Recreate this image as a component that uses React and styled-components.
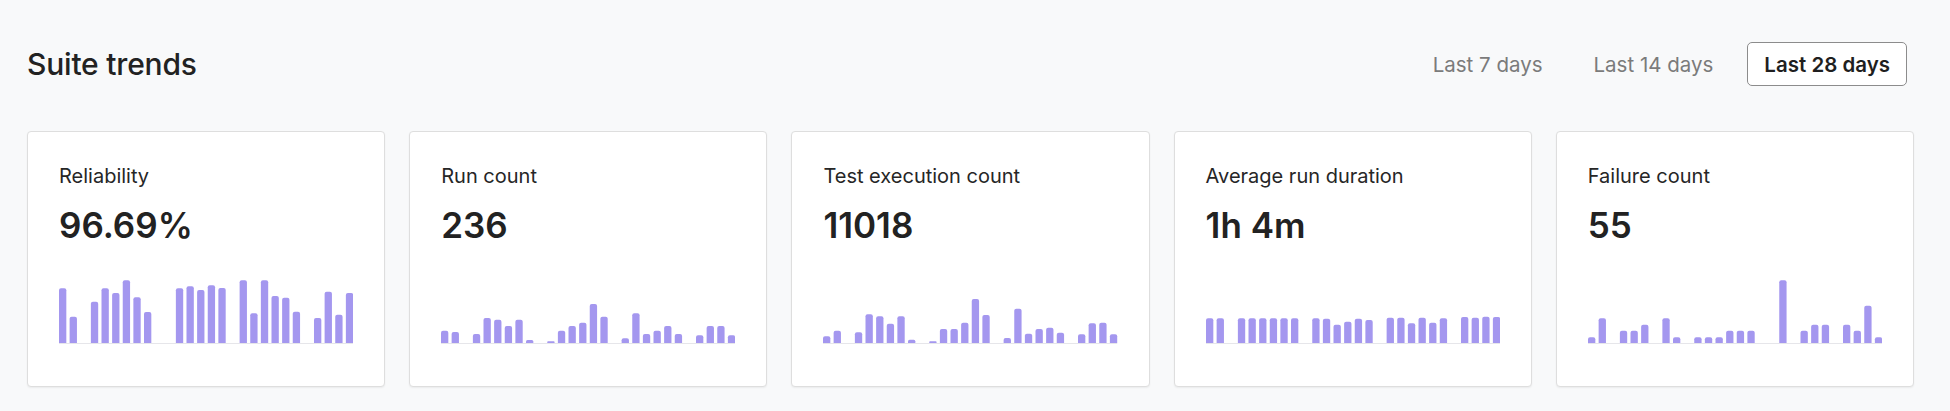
import React from 'react';
import styled, { createGlobalStyle } from 'styled-components';

const GlobalStyle = createGlobalStyle`
  html, body {
    margin: 0;
    padding: 0;
    background: #f8f9fa;
  }
  body {
    font-family: Inter, "Noto Sans", "Liberation Sans", sans-serif;
    color: #222;
  }
`;

const Page = styled.div`
  padding: 42px 36px 24px 27px;
`;

const Header = styled.div`
  display: flex;
  align-items: center;
  justify-content: space-between;
  padding-right: 7px;
  margin-bottom: 45px;
`;

const Title = styled.h1`
  margin: 0;
  font-size: 30px;
  font-weight: 500;
  letter-spacing: -0.2px;
  color: #222;
`;

const Tabs = styled.div`
  display: flex;
  gap: 17px;
`;

const Tab = styled.button`
  height: 44px;
  padding: 0 16px;
  border-radius: 5px;
  border: 1px solid ${(p) => (p.$active ? '#8c8c8c' : 'transparent')};
  background: ${(p) => (p.$active ? '#fff' : 'transparent')};
  color: ${(p) => (p.$active ? '#1f1f1f' : '#7b7b7b')};
  font-family: inherit;
  font-size: 20.5px;
  font-weight: ${(p) => (p.$active ? 600 : 400)};
  cursor: pointer;
`;

const Grid = styled.div`
  display: grid;
  grid-template-columns: repeat(5, 1fr);
  gap: 24px;
`;

const Card = styled.div`
  background: #fff;
  border: 1px solid #dedede;
  border-radius: 4px;
  box-shadow: 0 1px 2px rgba(0, 0, 0, 0.06);
  padding: 29px 31px 42px;
`;

const Label = styled.div`
  font-size: 20px;
  line-height: 30px;
  color: #262626;
`;

const Value = styled.div`
  margin-top: 13px;
  font-size: 35px;
  line-height: 43px;
  font-weight: 600;
  color: #222;
`;

const ChartBox = styled.div`
  margin-top: 32px;
  height: 65px;
  svg {
    display: block;
    width: 100%;
    height: 65px;
  }
`;

const W = 294;
const H = 64;
const GAP = 3.3;

function barPath(x, w, h) {
  const r = Math.min(2, h / 2, w / 2);
  const y = H - h;
  return `M${x} ${H}V${y + r}Q${x} ${y} ${x + r} ${y}H${x + w - r}Q${x + w} ${y} ${x + w} ${y + r}V${H}Z`;
}

const Sparkline = ({ data }) => {
  const pitch = (W + GAP) / data.length;
  const bw = pitch - GAP;
  return (
    <svg viewBox={`0 0 ${W} ${H + 1}`} preserveAspectRatio="none">
      <line x1="0" x2={W} y1={H + 0.5} y2={H + 0.5} stroke="#e6e6ea" strokeWidth="1" />
      {data.map((v, i) =>
        v > 0 ? <path key={i} d={barPath(i * pitch, bw, v / 3)} fill="#a497ef" /> : null
      )}
    </svg>
  );
};

const metrics = [
  {
    label: 'Reliability',
    value: '96.69%',
    bars: [164, 79, 0, 124, 164, 150, 188, 137, 93, 0, 0, 164, 170, 159, 173, 165, 0, 188, 89, 188, 141, 136, 94, 0, 75, 154, 85, 150],
  },
  {
    label: 'Run count',
    value: '236',
    bars: [37, 33, 0, 27, 75, 70, 51, 70, 9, 0, 5, 37, 51, 61, 117, 79, 0, 14, 89, 27, 37, 51, 27, 0, 23, 51, 51, 23],
  },
  {
    label: 'Test execution count',
    value: '11018',
    bars: [20, 37, 0, 32, 86, 80, 58, 80, 10, 0, 5, 42, 42, 61, 132, 84, 0, 15, 103, 28, 42, 46, 31, 0, 26, 59, 61, 26],
  },
  {
    label: 'Average run duration',
    value: '1h 4m',
    bars: [74, 74, 0, 74, 74, 74, 74, 74, 74, 0, 74, 73, 55, 64, 73, 69, 0, 76, 76, 59, 76, 61, 74, 0, 78, 76, 79, 78],
  },
  {
    label: 'Failure count',
    value: '55',
    bars: [17, 74, 0, 37, 37, 55, 0, 74, 17, 0, 17, 17, 17, 37, 37, 37, 0, 0, 188, 0, 37, 55, 55, 0, 55, 37, 112, 17],
  },
];

const ranges = ['Last 7 days', 'Last 14 days', 'Last 28 days'];

export default function App() {
  return (
    <>
      <GlobalStyle />
      <Page>
        <Header>
          <Title>Suite trends</Title>
          <Tabs>
            {ranges.map((r) => (
              <Tab key={r} $active={r === 'Last 28 days'}>
                {r}
              </Tab>
            ))}
          </Tabs>
        </Header>
        <Grid>
          {metrics.map((m) => (
            <Card key={m.label}>
              <Label>{m.label}</Label>
              <Value>{m.value}</Value>
              <ChartBox>
                <Sparkline data={m.bars} />
              </ChartBox>
            </Card>
          ))}
        </Grid>
      </Page>
    </>
  );
}
